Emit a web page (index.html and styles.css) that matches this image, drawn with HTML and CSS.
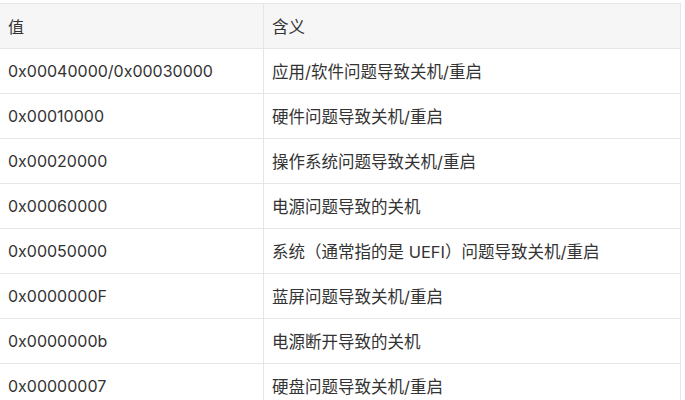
FILE: index.html
```html
<!DOCTYPE html>
<html lang="zh-CN">
<head>
<meta charset="utf-8">
<link rel="stylesheet" href="styles.css">
</head>
<body>
<table class="codes">
  <thead>
    <tr><th class="col-val">值</th><th class="desc">含义</th></tr>
  </thead>
  <tbody>
    <tr><td>0x00040000/0x00030000</td><td class="desc">应用/软件问题导致关机/重启</td></tr>
    <tr><td>0x00010000</td><td class="desc">硬件问题导致关机/重启</td></tr>
    <tr><td>0x00020000</td><td class="desc">操作系统问题导致关机/重启</td></tr>
    <tr><td>0x00060000</td><td class="desc">电源问题导致的关机</td></tr>
    <tr><td>0x00050000</td><td class="desc">系统（通常指的是 UEFI）问题导致关机/重启</td></tr>
    <tr><td>0x0000000F</td><td class="desc">蓝屏问题导致关机/重启</td></tr>
    <tr><td>0x0000000b</td><td class="desc">电源断开导致的关机</td></tr>
    <tr><td>0x00000007</td><td class="desc">硬盘问题导致关机/重启</td></tr>
  </tbody>
</table>
</body>
</html>
```
FILE: styles.css
```css
html, body {
  margin: 0;
  padding: 0;
  background: #ffffff;
}
body {
  padding-top: 3px;
  font-family: "Inter", "Noto Sans CJK SC", sans-serif;
  font-size: 16px;
  color: #333333;
}
.codes {
  border-collapse: collapse;
  margin-left: -1px;
  width: 682px;
  table-layout: fixed;
}
.codes th,
.codes td {
  border: 1px solid #e6e6e6;
  height: 44px;
  padding: 0 8px;
  text-align: left;
  vertical-align: middle;
  font-weight: normal;
  white-space: nowrap;
}
.codes th {
  background: #f6f6f6;
}
.codes .desc {
  font-size: 16.5px;
}
.col-val {
  width: 247px;
}
```
